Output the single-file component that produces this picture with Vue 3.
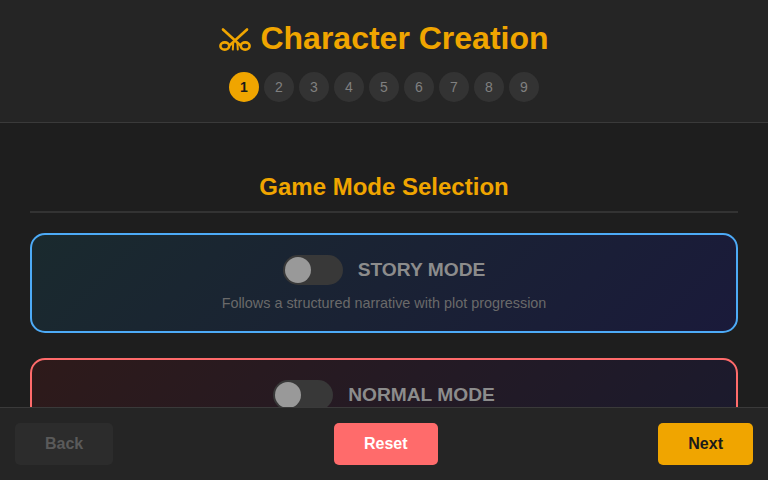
<script setup>
const steps = [1, 2, 3, 4, 5, 6, 7, 8, 9]
const modes = [
  { name: 'STORY MODE', desc: 'Follows a structured narrative with plot progression', cls: 'story' },
  { name: 'NORMAL MODE', desc: 'Balanced gameplay with standard rules', cls: 'normal' }
]
</script>

<template>
  <div class="app">
    <header class="top">
      <h1 class="title">
        <svg class="icon" viewBox="0 0 32 26" width="32" height="26" fill="none" stroke="currentColor" stroke-width="2.6" stroke-linecap="round" aria-hidden="true">
          <path d="M4 2.5 L21 18" />
          <path d="M28 2.5 L11 18" />
          <ellipse cx="5.8" cy="19" rx="4.4" ry="3.6" />
          <ellipse cx="26.2" cy="19" rx="4.4" ry="3.6" />
          <path d="M14.2 16 L13.8 22.6" stroke-width="2" />
          <path d="M18.4 16 L18.8 22.6" stroke-width="2" />
        </svg>
        <span>Character Creation</span>
      </h1>
      <div class="steps">
        <span v-for="s in steps" :key="s" class="step" :class="{ on: s === 1 }">{{ s }}</span>
      </div>
    </header>
    <main class="body">
      <h2 class="section">Game Mode Selection</h2>
      <div v-for="m in modes" :key="m.name" class="card" :class="m.cls">
        <div class="row">
          <span class="toggle"><span class="knob"></span></span>
          <span class="label">{{ m.name }}</span>
        </div>
        <p class="desc">{{ m.desc }}</p>
      </div>
    </main>
    <footer class="foot">
      <button class="btn back">Back</button>
      <button class="btn reset">Reset</button>
      <button class="btn next">Next</button>
    </footer>
  </div>
</template>

<style>
html, body { margin: 0; background: #1e1e1e; }
</style>

<style scoped>
.app {
  width: 768px;
  height: 480px;
  display: flex;
  flex-direction: column;
  overflow: hidden;
  background: #1e1e1e;
  font-family: "Liberation Sans", Arial, sans-serif;
}
.top {
  flex: none;
  background: #252525;
  border-bottom: 1px solid #3a3a3a;
  padding: 20px;
}
.title {
  margin: 0 0 15px;
  display: flex;
  justify-content: center;
  align-items: center;
  gap: 9px;
  font-size: 32px;
  line-height: 37px;
  font-weight: 700;
  color: #f0a500;
}
.icon { flex: none; margin-top: 2px; }
.steps { display: flex; justify-content: center; gap: 5px; }
.step {
  width: 30px;
  height: 30px;
  border-radius: 50%;
  background: #333;
  color: #808080;
  font-size: 14px;
  display: flex;
  align-items: center;
  justify-content: center;
}
.step.on { background: #f0a500; color: #1a1a1a; font-weight: 700; }
.body { flex: 1; min-height: 0; overflow: hidden; padding: 50px 30px 0; }
.section {
  margin: 0 0 20px;
  padding-bottom: 10px;
  border-bottom: 2px solid #333;
  font-size: 24px;
  line-height: 28px;
  font-weight: 700;
  color: #f0a500;
  text-align: center;
}
.card {
  border: 2px solid;
  border-radius: 15px;
  margin-bottom: 25px;
  padding: 20px;
}
.card.story {
  border-color: #4dabf7;
  background: linear-gradient(135deg, #1a2a2e, #1a1a3a);
}
.card.normal {
  border-color: #ff6b6b;
  background: linear-gradient(135deg, #2e1a1a, #1a1a2e);
}
.row { display: flex; justify-content: center; align-items: center; gap: 15px; }
.toggle {
  width: 60px;
  height: 30px;
  border-radius: 15px;
  background: #383838;
  position: relative;
  display: block;
}
.knob {
  position: absolute;
  left: 2px;
  top: 2px;
  width: 26px;
  height: 26px;
  border-radius: 50%;
  background: #999;
}
.label { font-size: 19.2px; font-weight: 700; color: #8c8c8c; }
.desc { margin: 10px 0 0; font-size: 14.4px; line-height: 16px; color: #6a6a6a; text-align: center; }
.foot {
  flex: none;
  height: 72px;
  display: flex;
  justify-content: space-between;
  align-items: center;
  padding: 0 15px;
  background: #252525;
  border-top: 1px solid #3a3a3a;
}
.btn {
  height: 42px;
  border: 0;
  border-radius: 5px;
  padding: 0 30px;
  font: 700 16px "Liberation Sans", Arial, sans-serif;
}
.back { background: #2c2c2c; color: #5a5a5a; }
.reset { background: #ff6b6b; color: #fff; }
.next { background: #f0a500; color: #1a1a1a; }
</style>
